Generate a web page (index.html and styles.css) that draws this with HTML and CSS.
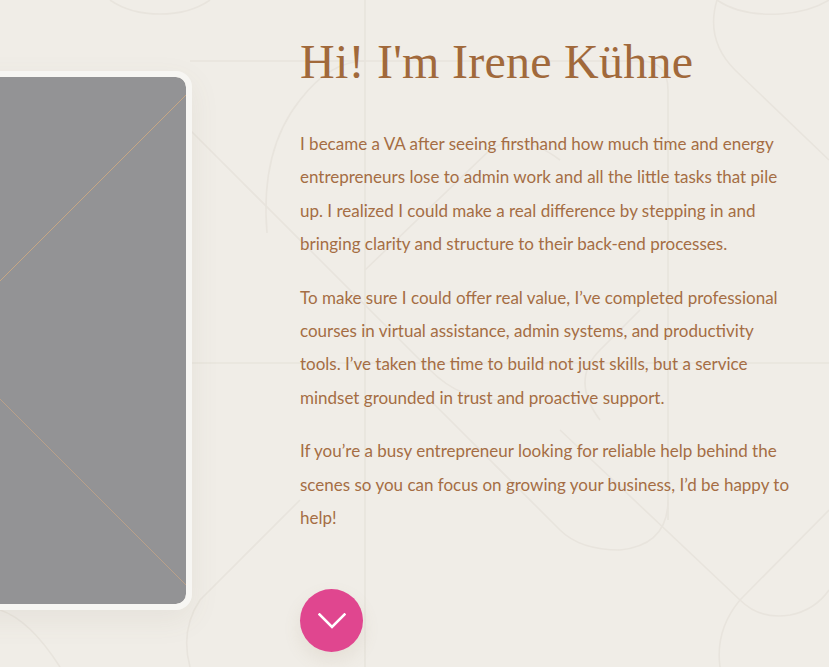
FILE: index.html
```html
<!DOCTYPE html>
<html lang="en">
<head>
<meta charset="utf-8">
<title>Hi! I'm Irene Kühne</title>
<link rel="stylesheet" href="styles.css">
</head>
<body>
<svg class="bg-pattern" width="829" height="667" viewBox="0 0 829 667" aria-hidden="true">
  <g fill="none" stroke="#e8e4dd" stroke-width="1.6">
    <path d="M365 0 V667"/>
    <path d="M190 61 H640 Q668 61 668 90 V520"/>
    <path d="M0 363 H829"/>
    <path d="M110 0 Q130 14 160 14 Q190 14 210 0"/>
    <path d="M717 0 Q740 16 780 14 Q810 12 829 0"/>
    <path d="M717 0 Q705 40 735 70 L829 160"/>
    <path d="M190 130 L430 370 Q460 400 500 400"/>
    <path d="M267 233 Q260 150 300 100 Q330 61 365 61"/>
    <path d="M560 160 Q520 130 490 150 L365 270"/>
    <path d="M300 500 L200 600 Q180 630 190 667"/>
    <path d="M560 430 L740 600 Q760 620 790 615 Q815 610 829 590"/>
    <path d="M829 510 L740 600 Q715 630 720 667"/>
    <path d="M668 500 Q668 545 620 550 Q580 550 560 530 L430 400"/>
    <path d="M600 420 Q570 380 600 350 L640 310"/>
    <path d="M0 610 Q30 620 60 667"/>
  </g>
</svg>
<main class="about">
  <div class="photo-card">
    <div class="photo">
      <svg class="photo-x" viewBox="0 0 496 527" preserveAspectRatio="none" aria-hidden="true">
        <line x1="496" y1="18" x2="0" y2="514" stroke="#c6a684" stroke-width="1"/>
        <line x1="0" y1="12" x2="496" y2="508" stroke="#b9a08a" stroke-width="1"/>
      </svg>
    </div>
  </div>
  <section class="intro">
    <h1 class="intro-title">Hi! I'm Irene Kühne</h1>
    <p class="intro-text">I became a VA after seeing firsthand how much time and energy entrepreneurs lose to admin work and all the little tasks that pile up. I realized I could make a real difference by stepping in and bringing clarity and structure to their back-end processes.</p>
    <p class="intro-text">To make sure I could offer real value, I’ve completed professional courses in virtual assistance, admin systems, and productivity tools. I’ve taken the time to build not just skills, but a service mindset grounded in trust and proactive support.</p>
    <p class="intro-text">If you’re a busy entrepreneur looking for reliable help behind the scenes so you can focus on growing your business, I’d be happy to help!</p>
    <button class="scroll-btn" type="button" aria-label="Scroll down">
      <svg width="28" height="16" viewBox="0 0 28 16" aria-hidden="true">
        <polyline points="1.5,1.5 14,14 26.5,1.5" fill="none" stroke="#ffffff" stroke-width="2.6" stroke-linecap="square"/>
      </svg>
    </button>
  </section>
</main>
</body>
</html>
```

FILE: styles.css
```css
html, body {
  margin: 0;
  padding: 0;
}

body {
  width: 829px;
  height: 667px;
  overflow: hidden;
  background: #f0ede7;
  position: relative;
  font-family: "Lato", "Liberation Sans", sans-serif;
}

.bg-pattern {
  position: absolute;
  left: 0;
  top: 0;
  z-index: 0;
}

.about {
  position: relative;
  z-index: 1;
  display: flex;
  align-items: flex-start;
}

.photo-card {
  flex: none;
  width: 496px;
  margin-left: -316px;
  margin-top: 71px;
  border: 6px solid #f7f6f3;
  border-radius: 16px;
  box-shadow: 0 10px 30px rgba(120, 100, 80, 0.08);
  overflow: hidden;
}

.photo {
  position: relative;
  height: 527px;
  background: #939395;
  border-radius: 10px;
  overflow: hidden;
}

.photo-x {
  position: absolute;
  inset: 0;
  width: 100%;
  height: 100%;
}

.intro {
  flex: none;
  width: 498px;
  margin-left: 108px;
  padding-top: 32px;
}

.intro-title {
  margin: 0 0 35px;
  font-family: "Liberation Serif", "DejaVu Serif", serif;
  font-weight: 400;
  font-size: 48px;
  line-height: 60px;
  color: #a1693b;
  letter-spacing: 0.25px;
}

.intro-text {
  margin: 0 0 20px;
  font-size: 17px;
  line-height: 33.4px;
  color: #a56d44;
}

.intro-text:last-of-type {
  margin-bottom: 0;
}

.scroll-btn {
  display: flex;
  align-items: center;
  justify-content: center;
  width: 63px;
  height: 63px;
  margin-top: 55px;
  padding: 0;
  border: none;
  border-radius: 50%;
  background: #e0468f;
  box-shadow: 0 8px 18px rgba(150, 120, 90, 0.12);
  cursor: pointer;
}
```
